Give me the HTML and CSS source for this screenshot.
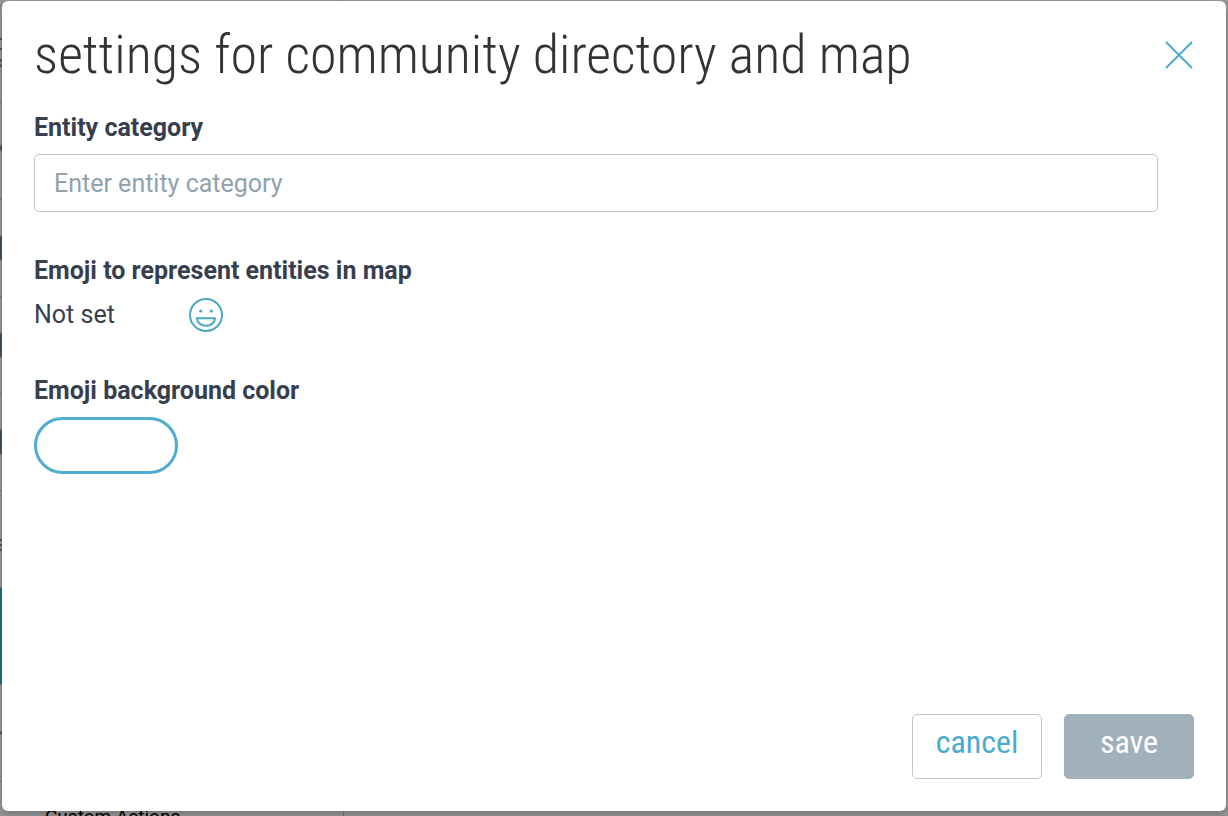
FILE: index.html
```html
<!DOCTYPE html>
<html lang="en">
<head>
    <meta charset="UTF-8">
    <meta name="viewport" content="width=device-width, initial-scale=1.0">
    <title>Settings for community directory and map</title>
    <link rel="stylesheet" href="styles.css">
</head>
<body>
    <!-- Page behind the dialog -->
    <nav class="sidebar" aria-hidden="true">
        <ul>
            <li><svg class="nav-icon" viewBox="0 0 24 26"><path d="M0 -2h20M0 8h20"/><circle cx="2" cy="22" r="3"/></svg></li>
            <li><svg class="nav-icon" viewBox="0 0 24 26"><circle class="fill" cx="5" cy="10" r="4"/></svg></li>
            <li><svg class="nav-icon" viewBox="0 0 24 26"><rect x="1" y="1" width="22" height="24" rx="2"/></svg></li>
            <li><svg class="nav-icon" viewBox="0 0 24 26"><rect x="1" y="1" width="22" height="24" rx="2"/></svg></li>
            <li><svg class="nav-icon" viewBox="0 0 24 26"><rect x="1" y="1" width="22" height="24" rx="2"/></svg></li>
            <li><svg class="nav-icon" viewBox="0 0 24 26"><path d="M0 14h6M0 19h2M0 24h20"/></svg></li>
            <li class="active"></li>
            <li><svg class="nav-icon" viewBox="0 0 24 26"><path d="M0 14l4 -4"/></svg></li>
        </ul>
        <p class="nav-heading">Custom Actions</p>
    </nav>

    <div class="modal" role="dialog" aria-modal="true" aria-labelledby="modal-title">
        <header class="modal-header">
            <h1 id="modal-title">settings for community directory and map</h1>
            <button type="button" class="close" aria-label="Close">
                <svg viewBox="0 0 28 28"><path d="M1 1l26 26M27 1L1 27"/></svg>
            </button>
        </header>
        <form class="modal-form">
            <div class="field">
                <label for="category">Entity category</label>
                <input type="text" id="category" name="category" placeholder="Enter entity category">
            </div>
            <div class="field">
                <h2>Emoji to represent entities in map</h2>
                <div class="emoji-row">
                    <span class="emoji-value">Not set</span>
                    <button type="button" class="emoji-button" aria-label="Choose emoji">
                        <svg viewBox="0 0 34 34">
                            <circle cx="17" cy="17" r="16"/>
                            <circle class="eye" cx="11.700" cy="13" r="1.600"/>
                            <circle class="eye" cx="22.300" cy="13" r="1.600"/>
                            <path d="M8 20.300h18c0 4.200-4 7.500-9 7.500s-9-3.300-9-7.500z"/>
                        </svg>
                    </button>
                </div>
            </div>
            <div class="field">
                <h2>Emoji background color</h2>
                <button type="button" class="color-button" aria-label="Emoji background color"></button>
            </div>
            <footer class="modal-footer">
                <button type="button" class="btn cancel">cancel</button>
                <button type="submit" class="btn save" disabled>save</button>
            </footer>
        </form>
    </div>
</body>
</html>
```

FILE: styles.css
```css
* {
    box-sizing: border-box;
}

body {
    margin: 0;
    height: 100vh;
    overflow: hidden;
    font-family: Roboto, sans-serif;
    color: #373f4e;
    background-color: #999;
}

h1, h2, p, ul {
    margin: 0;
    padding: 0;
}

button {
    font-family: inherit;
    cursor: pointer;
}

svg {
    display: block;
    fill: none;
}

/* Sidebar behind the dialog */
.sidebar {
    width: 344px;
    min-height: 100vh;
    padding-top: 5px;
    border-right: 1px solid #7c7c7c;
}

.sidebar ul {
    list-style: none;
    border-top: 1px solid #7c7c7c;
}

.sidebar li {
    display: flex;
    align-items: center;
    height: 97px;
    border-bottom: 1px solid #7c7c7c;
}

.sidebar li.active {
    background-color: #2a7188;
}

.nav-icon {
    width: 24px;
    height: 26px;
    overflow: visible;
    stroke: #465763;
    stroke-width: 2;
}

.nav-icon .fill {
    fill: #465763;
}

.nav-heading {
    padding: 23px 45px;
    font-size: 19px;
    line-height: 24px;
    color: #000;
}

/* Dialog */
.modal {
    position: absolute;
    top: 1px;
    right: 2px;
    bottom: 5px;
    left: 2px;
    display: flex;
    flex-direction: column;
    padding: 22px 32px 32px;
    background-color: #fff;
    border-radius: 6px;
    box-shadow: 0 4px 12px rgba(0, 0, 0, 0.25);
}

.modal-header {
    display: flex;
    align-items: center;
    justify-content: space-between;
    margin-bottom: 25px;
}

.modal-header h1 {
    font-family: "Roboto Condensed", Roboto, sans-serif;
    font-size: 54px;
    font-weight: 300;
    line-height: 64px;
    color: #333;
    white-space: nowrap;
}

.close {
    padding: 0;
    border: none;
    background: none;
}

.close svg {
    width: 30px;
    height: 28px;
    stroke: #4babcb;
    stroke-width: 2;
}

.modal-form {
    display: flex;
    flex: 1;
    flex-direction: column;
}

.field {
    display: flex;
    flex-direction: column;
    align-items: flex-start;
    margin-bottom: 43px;
}

.field label, .field h2 {
    margin-bottom: 10px;
    font-size: 25px;
    font-weight: 700;
    line-height: 32px;
}

.field input {
    align-self: stretch;
    height: 58px;
    margin-right: 36px;
    padding: 0 19px;
    border: 1px solid #bcc7cd;
    border-radius: 5px;
    font-family: inherit;
    font-size: 25px;
    color: inherit;
}

.field input::placeholder {
    color: #90a2ae;
    opacity: 1;
}

.emoji-row {
    display: flex;
    align-items: center;
}

.emoji-value {
    width: 155px;
    font-size: 25px;
    line-height: 35px;
}

.emoji-button {
    padding: 0;
    border: none;
    background: none;
}

.emoji-button svg {
    width: 34px;
    height: 34px;
    stroke: #4ba7c4;
    stroke-width: 2;
}

.emoji-button .eye {
    fill: #4ba7c4;
    stroke: none;
}

.color-button {
    width: 144px;
    height: 57px;
    border: 3px solid #4fadcf;
    border-radius: 29px;
    background-color: #fff;
}

.modal-footer {
    display: flex;
    justify-content: flex-end;
    gap: 22px;
    margin-top: auto;
}

.btn {
    width: 130px;
    height: 65px;
    padding: 0 0 10px;
    border: 1px solid #bcc7cd;
    border-radius: 5px;
    font-family: "Roboto Condensed", Roboto, sans-serif;
    font-size: 32px;
    background-color: #fff;
}

.cancel {
    color: #4babcb;
}

.save {
    border-color: #a1b1bb;
    color: #fff;
    background-color: #a1b1bb;
}
```
